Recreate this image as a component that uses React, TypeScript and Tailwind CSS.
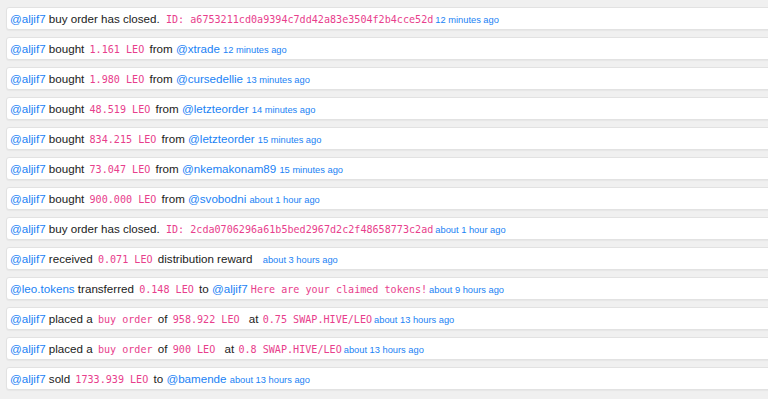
import React from "react";

const U = ({ children }: { children: React.ReactNode }) => (
  <span className="text-[#1a82f5]">{children}</span>
);
const C = ({ children, cls = "" }: { children: React.ReactNode; cls?: string }) => (
  <span
    className={
      "text-[#e83e8c] text-[10.1px] mx-[2px] " + cls
    }
    style={{ fontFamily: '"DejaVu Sans Mono", "Liberation Mono", monospace' }}
  >
    {children}
  </span>
);
const T = ({ children, cls = "" }: { children: React.ReactNode; cls?: string }) => (
  <span className={"text-[#1a82f5] text-[9.3px] " + cls}>{children}</span>
);

const Row = ({ children }: { children: React.ReactNode }) => (
  <div className="w-[800px] h-[23px] mb-[7px] flex items-center pl-[3px] bg-white border border-[#e2e2e2] rounded-[3px] shadow-[0_1px_1px_rgba(0,0,0,0.04)] whitespace-pre text-[11.6px] text-[#212121]">
    <div>{children}</div>
  </div>
);

export default function App() {
  return (
    <div
      className="w-[768px] h-[399px] overflow-hidden bg-[#f0f0f0] pt-[7px] pl-[6px]"
      style={{ fontFamily: '"Liberation Sans", Arial, sans-serif' }}
    >
      <Row>
        <U>@aljif7</U> buy order has closed. <C cls="ml-[3px]">ID: a6753211cd0a9394c7dd42a83e3504f2b4cce52d</C><T>12 minutes ago</T>
      </Row>
      <Row>
        <U>@aljif7</U> bought <C>1.161 LEO</C> from <U>@xtrade</U> <T>12 minutes ago</T>
      </Row>
      <Row>
        <U>@aljif7</U> bought <C>1.980 LEO</C> from <U>@cursedellie</U> <T>13 minutes ago</T>
      </Row>
      <Row>
        <U>@aljif7</U> bought <C>48.519 LEO</C> from <U>@letzteorder</U> <T>14 minutes ago</T>
      </Row>
      <Row>
        <U>@aljif7</U> bought <C>834.215 LEO</C> from <U>@letzteorder</U> <T>15 minutes ago</T>
      </Row>
      <Row>
        <U>@aljif7</U> bought <C>73.047 LEO</C> from <U>@nkemakonam89</U> <T>15 minutes ago</T>
      </Row>
      <Row>
        <U>@aljif7</U> bought <C>900.000 LEO</C> from <U>@svobodni</U> <T>about 1 hour ago</T>
      </Row>
      <Row>
        <U>@aljif7</U> buy order has closed. <C cls="ml-[3px]">ID: 2cda0706296a61b5bed2967d2c2f48658773c2ad</C><T>about 1 hour ago</T>
      </Row>
      <Row>
        <U>@aljif7</U> received <C>0.071 LEO</C> distribution reward <T cls="ml-[7px]">about 3 hours ago</T>
      </Row>
      <Row>
        <U>@leo.tokens</U> transferred <C>0.148 LEO</C> to <U>@aljif7</U> <C cls="ml-0">Here are your claimed tokens!</C><T>about 9 hours ago</T>
      </Row>
      <Row>
        <U>@aljif7</U> placed a <C>buy order</C> of <C>958.922 LEO</C><span className="ml-[4px]"> at </span><C cls="ml-[1px]">0.75 SWAP.HIVE/LEO</C><T>about 13 hours ago</T>
      </Row>
      <Row>
        <U>@aljif7</U> placed a <C>buy order</C> of <C>900 LEO</C><span className="ml-[4px]"> at </span><C cls="ml-[1px]">0.8 SWAP.HIVE/LEO</C><T>about 13 hours ago</T>
      </Row>
      <Row>
        <U>@aljif7</U> sold <C>1733.939 LEO</C> to <U>@bamende</U> <T>about 13 hours ago</T>
      </Row>
    </div>
  );
}
